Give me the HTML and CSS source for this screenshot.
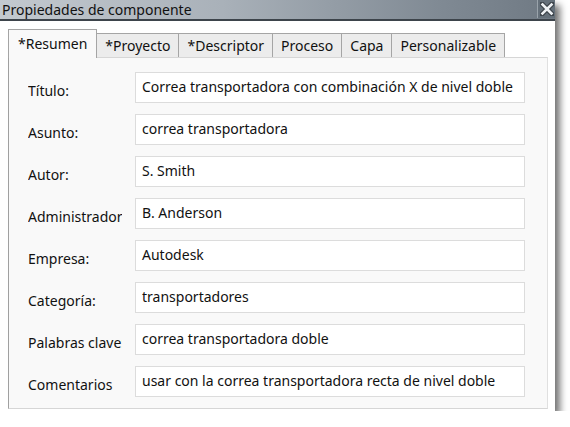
FILE: index.html
```html
<!DOCTYPE html>
<html>
<head>
<meta charset="utf-8">
<link rel="stylesheet" href="styles.css">
</head>
<body>
<div class="window">
  <div class="titlebar">
    <span class="title">Propiedades de componente</span>
    <div class="close">
      <svg width="14" height="14" viewBox="0 0 14 14">
        <path d="M2 2 L12 12 M12 2 L2 12" stroke="#3c434a" stroke-width="5" stroke-linecap="square"/>
        <path d="M2.5 2.5 L11.5 11.5 M11.5 2.5 L2.5 11.5" stroke="#eef1f4" stroke-width="2.6" stroke-linecap="square"/>
      </svg>
    </div>
  </div>
  <div class="body">
    <div class="tabs">
      <div class="tab active">*Resumen</div>
      <div class="tab">*Proyecto</div>
      <div class="tab">*Descriptor</div>
      <div class="tab">Proceso</div>
      <div class="tab">Capa</div>
      <div class="tab">Personalizable</div>
    </div>
    <div class="panel">
      <div class="row"><div class="label">Título:</div><div class="field">Correa transportadora con combinación X de nivel doble</div></div>
      <div class="row"><div class="label">Asunto:</div><div class="field">correa transportadora</div></div>
      <div class="row"><div class="label">Autor:</div><div class="field">S. Smith</div></div>
      <div class="row"><div class="label">Administrador</div><div class="field">B. Anderson</div></div>
      <div class="row"><div class="label">Empresa:</div><div class="field">Autodesk</div></div>
      <div class="row"><div class="label">Categoría:</div><div class="field">transportadores</div></div>
      <div class="row"><div class="label">Palabras clave:</div><div class="field">correa transportadora doble</div></div>
      <div class="row"><div class="label">Comentarios</div><div class="field">usar con la correa transportadora recta de nivel doble</div></div>
    </div>
  </div>
</div>
</body>
</html>
```
FILE: styles.css
```css
html, body {
  margin: 0;
  padding: 0;
  background: #ffffff;
  font-family: "Noto Sans", "Open Sans", sans-serif;
}
.window {
  width: 555px;
  height: 411px;
  background: #ffffff;
  box-shadow: 5px 5px 7px rgba(0,0,0,0.55);
  display: flex;
  flex-direction: column;
  overflow: hidden;
}
.titlebar {
  height: 19px;
  flex: none;
  display: flex;
  align-items: center;
  justify-content: space-between;
  background: linear-gradient(to right, #c3c9cf 0%, #a9b1b9 40%, #7f8993 80%, #6f7983 100%);
  border-bottom: 2px solid #3d444b;
}
.title {
  font-size: 14px;
  color: #111111;
  padding-left: 2px;
  line-height: 19px;
}
.close {
  width: 17px;
  height: 18px;
  align-self: flex-start;
  background: #65707a;
  border-left: 1px solid #9aa3ab;
  display: flex;
  align-items: center;
  justify-content: center;
}
.body {
  flex: 1;
  padding: 8px 7px 2px 8px;
  display: flex;
  flex-direction: column;
}
.tabs {
  display: flex;
  align-items: flex-end;
  height: 28px;
  flex: none;
}
.tab {
  height: 24px;
  box-sizing: border-box;
  padding: 0 8px;
  border: 1px solid #a5a5a5;
  border-bottom: none;
  border-left: none;
  background: #ececec;
  font-size: 14px;
  line-height: 23px;
  color: #111;
}
.tab.active {
  height: 29px;
  border-left: 1px solid #a5a5a5;
  background: #f9f9f9;
  padding: 0 9px 0 9px;
  line-height: 27px;
  margin-bottom: -1px;
  position: relative;
  z-index: 1;
}
.panel {
  flex: 1;
  background: #f9f9f9;
  border-left: 1px solid #a0a0a0;
  border-top: 1px solid #d6d6d6;
  border-right: 1px solid #e0e0e0;
  border-bottom: 1px solid #d6d6d6;
  padding: 14px 22px 0 19px;
  display: flex;
  flex-direction: column;
  gap: 11px;
}
.row {
  display: flex;
  align-items: center;
  height: 31px;
}
.label {
  width: 94px;
  margin-right: 13px;
  flex: none;
  font-size: 14px;
  color: #111;
  white-space: nowrap;
  overflow: hidden;
  padding-top: 5px;
}
.field {
  flex: 1;
  height: 31px;
  box-sizing: border-box;
  background: #ffffff;
  border: 1px solid #dcdcdc;
  font-size: 14px;
  line-height: 27px;
  padding: 0 6px;
  color: #111;
  white-space: nowrap;
  overflow: hidden;
}
```
